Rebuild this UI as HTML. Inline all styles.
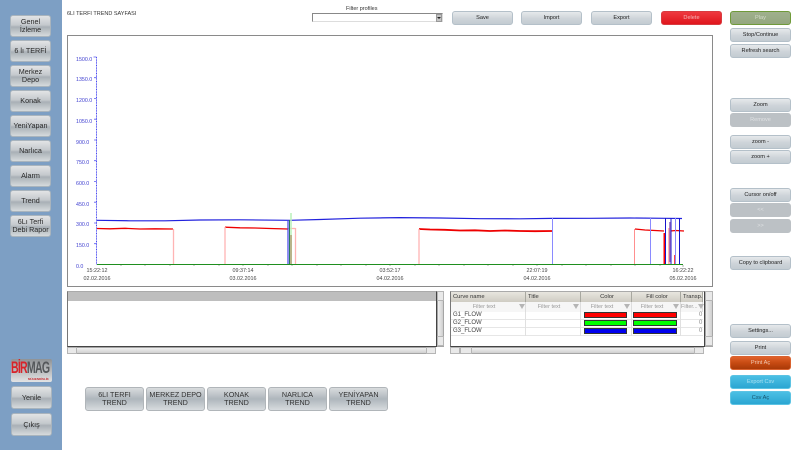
<!DOCTYPE html>
<html><head><meta charset="utf-8">
<style>
html,body{margin:0;padding:0;width:800px;height:450px;overflow:hidden;background:#fff}
body{font-family:"Liberation Sans",sans-serif;color:#333;position:relative}
#w{position:absolute;left:0;top:0;width:800px;height:450px;filter:blur(.3px);background:#fff}
div{box-sizing:border-box}
.a{position:absolute}
.side{position:absolute;left:0;top:0;width:62px;height:450px;background:#7d9fc4}
.b{position:absolute;display:flex;align-items:center;justify-content:center;text-align:center;white-space:nowrap;line-height:8px}
.nav{left:10px;width:41px;height:22px;border:1px solid #a9b4bd;border-radius:3px;font-size:7.2px;line-height:8px;color:#2a2a2a;background:linear-gradient(#e2e4e5,#c4c9cd 45%,#a9b0b6 55%,#d6dadc)}
.low{width:59px;height:24px;top:387px;border:1px solid #b0b5b9;border-radius:3px;font-size:7.2px;background:linear-gradient(#d9dcde,#aeb6bc 50%,#d7dbde);line-height:8px}
.t{height:14px;width:61px;border:1px solid #b4c0c9;border-radius:3px;font-size:5.6px;background:linear-gradient(#e6e9eb,#ced4d9 55%,#c3cbd1);color:#222}
.r{left:730px}
.dis{background:#bcc1c5;border-color:#bcc1c5;color:#dfe1e3}
.txt{position:absolute;white-space:nowrap;font-size:5.5px;line-height:7px}
.yl{position:absolute;left:76px;text-align:left;font-size:5.3px;line-height:7px;color:#3f3fd0}
.xl{position:absolute;width:50px;text-align:center;font-size:5.4px;line-height:8px;color:#444}
.sb{position:absolute;background:linear-gradient(#f0f0f0,#d0d0d0);border:1px solid #a5a5a5}
.sv{position:absolute;background:linear-gradient(90deg,#f0f0f0,#cfcfcf);border:1px solid #a5a5a5}
.sq{position:absolute;background:#e9e9e9;border:1px solid #b5b5b5}
.th{position:absolute;top:292px;height:10px;font-size:5.8px;line-height:10px;padding-left:2px;background:linear-gradient(#e8e6df,#cfccc3);border-right:1px solid #a8a8a0;color:#333;white-space:nowrap;overflow:hidden}
.fl{position:absolute;top:302px;height:10px;font-size:5.5px;line-height:10px;padding-right:8px;text-align:center;color:#999;border-right:1px solid #ddd;background:#f6f6f6;white-space:nowrap;overflow:hidden}
.rw{position:absolute;left:453px;font-size:6px;line-height:7px;color:#444;white-space:nowrap}
.sw{position:absolute;height:6px;border:1px solid #333}
.fn{position:absolute;top:304px;width:0;height:0;border-left:3px solid transparent;border-right:3px solid transparent;border-top:5px solid #b5b5b5}
</style></head>
<body><div id="w">
<div class="side"></div>
<div class="b nav" style="top:15px">Genel<br>İzleme</div>
<div class="b nav" style="top:40px">6 lı TERFİ</div>
<div class="b nav" style="top:65px">Merkez<br>Depo</div>
<div class="b nav" style="top:90px">Konak</div>
<div class="b nav" style="top:115px">YeniYapan</div>
<div class="b nav" style="top:140px">Narlıca</div>
<div class="b nav" style="top:165px">Alarm</div>
<div class="b nav" style="top:190px">Trend</div>
<div class="b nav" style="top:215px">6Lı Terfi<br>Debi Rapor</div>

<div class="a" style="left:11px;top:359px;width:41px;height:23px;background:linear-gradient(#8f9295,#e2e3e4);border-radius:2px;overflow:hidden">
<div class="a" style="left:0;top:0;font-size:17px;line-height:18px;font-weight:bold;letter-spacing:-1.2px;color:#d8232a;white-space:nowrap;transform:scaleX(.62);transform-origin:left">BİR<span style="color:#55585b">MAG</span></div>
<div class="a" style="left:17px;top:18px;font-size:3px;line-height:4px;color:#c5262b;white-space:nowrap;font-weight:bold">MÜHENDİSLİK</div>
</div>
<div class="b nav" style="left:11px;top:386px;height:23px">Yenile</div>
<div class="b nav" style="left:11px;top:413px;height:23px">Çıkış</div>

<div class="txt" style="left:67px;top:11px">6LI TERFI TREND SAYFASI</div>
<div class="txt" style="left:346px;top:5.5px">Filter profiles</div>
<div class="a" style="left:312px;top:13px;width:131px;height:9px;border:1px solid #888;border-right-color:#ddd;border-bottom-color:#ddd;background:#fff"></div>
<div class="a" style="left:436px;top:14px;width:6px;height:8px;background:#c4c4c4;border:1px solid #999"><div class="a" style="left:0;top:2px;border:2px solid transparent;border-top:2px solid #222"></div></div>

<div class="b t" style="left:452px;top:11px">Save</div>
<div class="b t" style="left:521px;top:11px">Import</div>
<div class="b t" style="left:591px;top:11px">Export</div>
<div class="b t" style="left:661px;top:11px;background:linear-gradient(#ee3a3f,#e0161d);border-color:#d83b40;color:#f3b8ba">Delete</div>
<div class="b t r" style="top:11px;background:linear-gradient(#9fb08d,#93a77f);border:1px solid #6f9a3a;color:#d6dccb">Play</div>
<div class="b t r" style="top:28px">Stop/Continue</div>
<div class="b t r" style="top:44px">Refresh search</div>
<div class="b t r" style="top:98px">Zoom</div>
<div class="b t r dis" style="top:113px">Remove</div>
<div class="b t r" style="top:135px">zoom -</div>
<div class="b t r" style="top:150px">zoom +</div>
<div class="b t r" style="top:188px">Cursor on/off</div>
<div class="b t r dis" style="top:203px">&lt;&lt;</div>
<div class="b t r dis" style="top:219px">&gt;&gt;</div>
<div class="b t r" style="top:256px">Copy to clipboard</div>
<div class="b t r" style="top:324px">Settings...</div>
<div class="b t r" style="top:341px">Print</div>
<div class="b t r" style="top:356px;background:linear-gradient(#e0622b,#c64a12 50%,#a93a08);border-color:#d9622e;color:#f0c9b4">Print Aç</div>
<div class="b t r" style="top:375px;background:linear-gradient(#4bbfe4,#2ba6d2);border-color:#5cc3e3;color:#a9e0f2">Export Csv</div>
<div class="b t r" style="top:391px;background:linear-gradient(#4bbfe4,#2ba6d2);border-color:#5cc3e3;color:#17556e">Csv Aç</div>

<div class="a" style="left:67px;top:35px;width:646px;height:252px;border:1px solid #8a8a8a;background:#fff"></div>
<svg class="a" style="left:0;top:0" width="800" height="450" fill="none">
<line x1="96.5" y1="57" x2="96.5" y2="265" stroke="#4a4af0" stroke-width="1" stroke-dasharray="1 .6"/>
<path d="M93.5 57h3M94 77.700h2.500M94 98.500h2.500M94 119.200h2.500M94 140h2.500M94 160.700h2.500M94 181.500h2.500M94 202.200h2.500M94 223h2.500M94 243.700h2.500" stroke="#5a5af0" stroke-width=".8"/>
<path d="M121 265v1M145 265v1M170 265v1M194 265v1M219 265v1M243 265v1M268 265v1M292 265v1M317 265v1M341 265v1M366 265v1M390 265v1M415 265v1M439 265v1M464 265v1M488 265v1M513 265v1M537 265v1M562 265v1M586 265v1M611 265v1M635 265v1M660 265v1M683 265v2" stroke="#999" stroke-width=".8"/>
<g stroke="#ee0000" stroke-width="1.300">
<path d="M97 228.500L110 228.800L125 228.300L140 229L155 228.800L173 229" />
<path d="M225 227.200L240 227.800L255 228L270 228.500L288 229"/>
<path d="M419 229L430 229.500L445 229.800L460 230.500L475 230.300L490 231L505 230.500L520 231L535 231.200L552 231" stroke-width="1.800"/>
<path d="M635 229L645 230L655 230.500L664 231M670 231L676 230.500L684 231"/>
</g>
<g stroke="#ffb4b4" stroke-width="1.300">
<path d="M173.500 229V264M225 227V264M419 229V264M295.500 228V264"/>
<path d="M288 228.500H295.500"/>
</g>
<path d="M634.500 229V264" stroke="#ff8f8f" stroke-width="1"/>
<path d="M669 228V264" stroke="#ff9a9a" stroke-width="1.500"/>
<path d="M664.500 233V264" stroke="#f00" stroke-width="2"/>
<path d="M674.500 255V264" stroke="#f44" stroke-width="1"/>
<path d="M291 235V264" stroke="#b50000" stroke-width="2"/>
<path d="M97 220.300L130 220.800L165 220.800L200 220L240 219.800L290 220.300L320 219.500L360 218.200L400 217.600L440 218L480 218.700L520 218.800L552 218.400L590 218.300L630 218L665 218.300L682 218.500" stroke="#2222dd" stroke-width="1.200"/>
<path d="M552.500 218V264M650.500 218V264M675.500 218V264" stroke="#8a8aff" stroke-width="1"/>
<path d="M288 220V264" stroke="#4444e8" stroke-width="1.200"/>
<path d="M665.500 218V264M671 218V264M679.500 218V264" stroke="#1515cc" stroke-width="1"/>
<path d="M670 222V262" stroke="#8a5cc0" stroke-width="1.500"/>
<path d="M291 213V264" stroke="#b8f0b8" stroke-width="1.500"/>
<path d="M289.500 220V264" stroke="#2a7a5a" stroke-width="1"/>
<line x1="97" y1="264.500" x2="683" y2="264.500" stroke="#1f8f1f" stroke-width="1"/>
</svg>
<div class="yl" style="top:57px">1500.0</div>
<div class="yl" style="top:77px">1350.0</div>
<div class="yl" style="top:98px">1200.0</div>
<div class="yl" style="top:119px">1050.0</div>
<div class="yl" style="top:140px">900.0</div>
<div class="yl" style="top:160px">750.0</div>
<div class="yl" style="top:181px">600.0</div>
<div class="yl" style="top:202px">450.0</div>
<div class="yl" style="top:222px">300.0</div>
<div class="yl" style="top:243px">150.0</div>
<div class="yl" style="top:264px">0.0</div>
<div class="xl" style="left:72px;top:267px">15:22:12<br>02.02.2016</div>
<div class="xl" style="left:218px;top:267px">09:37:14<br>03.02.2016</div>
<div class="xl" style="left:365px;top:267px">03:52:17<br>04.02.2016</div>
<div class="xl" style="left:512px;top:267px">22:07:19<br>04.02.2016</div>
<div class="xl" style="left:658px;top:267px">16:22:22<br>05.02.2016</div>

<div class="a" style="left:67px;top:291px;width:370px;height:56px;border:1px solid #777;border-top-color:#aaa;border-bottom:1px solid #444;border-right:1px solid #444;background:#fff"><div class="a" style="left:0;top:0;right:0;height:9px;background:#bebebe"></div></div>
<div class="sv" style="left:437px;top:291px;width:7px;height:56px"></div>
<div class="sq" style="left:437px;top:291px;width:7px;height:10px"></div>
<div class="sq" style="left:437px;top:336px;width:7px;height:10px"></div>
<div class="sb" style="left:67px;top:347px;width:369px;height:7px"></div>
<div class="sq" style="left:67px;top:347px;width:10px;height:7px"></div>
<div class="sq" style="left:426px;top:347px;width:10px;height:7px"></div>

<div class="a" style="left:450px;top:291px;width:255px;height:56px;border:1px solid #777;border-top-color:#aaa;border-bottom:1px solid #444;border-right:1px solid #444;background:#fff"></div>
<div class="th" style="left:451px;width:75px">Curve name</div>
<div class="th" style="left:526px;width:55px">Title</div>
<div class="th" style="left:581px;width:51px;text-align:center">Color</div>
<div class="th" style="left:632px;width:49px;text-align:center">Fill color</div>
<div class="th" style="left:681px;width:22px">Transp...</div>
<div class="fl" style="left:451px;width:75px">Filter text</div>
<div class="fl" style="left:526px;width:55px">Filter text</div>
<div class="fl" style="left:581px;width:51px">Filter text</div>
<div class="fl" style="left:632px;width:49px">Filter text</div>
<div class="fl" style="left:681px;width:22px;text-align:left;padding:0">Filter...</div>
<div class="fn" style="left:519px"></div>
<div class="fn" style="left:573px"></div>
<div class="fn" style="left:624px"></div>
<div class="fn" style="left:673px"></div>
<div class="fn" style="left:698px"></div>
<div class="a" style="left:451px;top:319px;width:252px;height:1px;background:#e6e6e6"></div>
<div class="a" style="left:451px;top:327px;width:252px;height:1px;background:#e6e6e6"></div>
<div class="a" style="left:451px;top:335px;width:252px;height:1px;background:#e6e6e6"></div>
<div class="a" style="left:525px;top:312px;width:1px;height:24px;background:#e0e0e0"></div>
<div class="a" style="left:580px;top:312px;width:1px;height:24px;background:#e0e0e0"></div>
<div class="a" style="left:631px;top:312px;width:1px;height:24px;background:#e0e0e0"></div>
<div class="a" style="left:680px;top:312px;width:1px;height:24px;background:#e0e0e0"></div>
<div class="rw" style="top:312px">G1_FLOW</div>
<div class="rw" style="top:320px">G2_FLOW</div>
<div class="rw" style="top:328px">G3_FLOW</div>
<div class="sw" style="left:584px;top:312px;width:43px;background:#f00"></div>
<div class="sw" style="left:633px;top:312px;width:44px;background:#f00"></div>
<div class="sw" style="left:584px;top:320px;width:43px;background:#0f0"></div>
<div class="sw" style="left:633px;top:320px;width:44px;background:#0f0"></div>
<div class="sw" style="left:584px;top:328px;width:43px;background:#00e"></div>
<div class="sw" style="left:633px;top:328px;width:44px;background:#00e"></div>
<div class="rw" style="left:699px;top:312px;color:#888">0</div>
<div class="rw" style="left:699px;top:320px;color:#888">0</div>
<div class="rw" style="left:699px;top:328px;color:#888">0</div>
<div class="sv" style="left:705px;top:291px;width:8px;height:56px"></div>
<div class="sq" style="left:705px;top:291px;width:8px;height:10px"></div>
<div class="sq" style="left:705px;top:336px;width:8px;height:10px"></div>
<div class="sb" style="left:450px;top:347px;width:254px;height:7px"></div>
<div class="sq" style="left:450px;top:347px;width:10px;height:7px"></div>
<div class="sq" style="left:460px;top:347px;width:12px;height:7px"></div>
<div class="sq" style="left:694px;top:347px;width:10px;height:7px"></div>

<div class="b low" style="left:85px">6LI TERFI<br>TREND</div>
<div class="b low" style="left:146px">MERKEZ DEPO<br>TREND</div>
<div class="b low" style="left:207px">KONAK<br>TREND</div>
<div class="b low" style="left:268px">NARLICA<br>TREND</div>
<div class="b low" style="left:329px">YENİYAPAN<br>TREND</div>
</div></body></html>
